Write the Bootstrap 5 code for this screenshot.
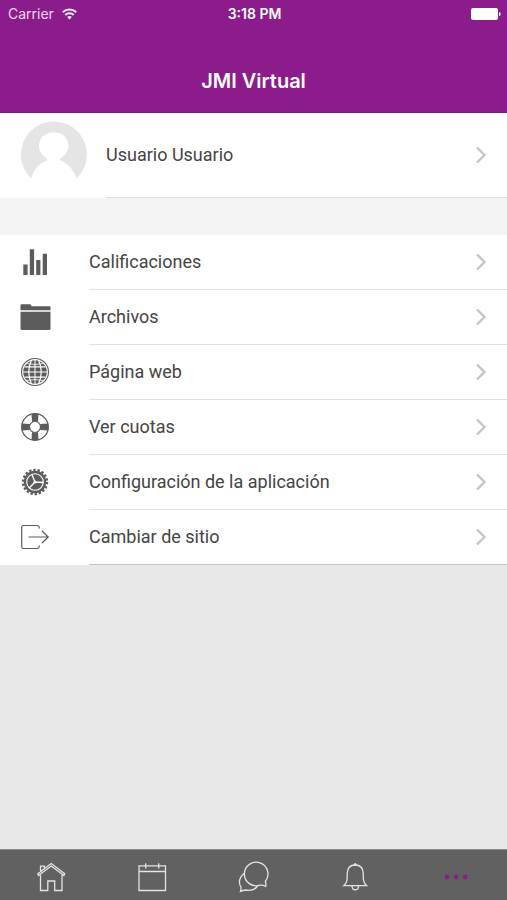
<!DOCTYPE html>
<html lang="es">
<head>
<meta charset="utf-8">
<meta name="viewport" content="width=device-width, initial-scale=1">
<title>JMI Virtual</title>
<link href="https://cdn.jsdelivr.net/npm/bootstrap@5.3.0/dist/css/bootstrap.min.css" rel="stylesheet">
<style>
  body { font-family: Inter, "Liberation Sans", sans-serif; background: #e8e8e8; color: #444; }
  .app-header { background: #8c1c8c; border-bottom: 1px solid #7b177b; }
  .status-bar { height: 27px; font-size: 14px; padding: 0 6px 0 8px; }
  .status-bar .carrier { color: #f0d8f0; }
  .app-title { font-size: 20px; line-height: 24px; font-weight: 600; padding: 42px 0 19px; }
  .menu-row { font-family: Roboto, Inter, sans-serif; font-size: 18px; line-height: 24px; color: #444; padding-left: 19px; }
  .menu-label { border-bottom: 1px solid #e2e2e2; padding-right: 20px; }
  .menu-icon { width: 70px; color: #5c5c5c; padding-bottom: 2px; }
  .menu-list .menu-label { height: 55px; }
  .menu-list .menu-row:last-child .menu-label { border-color: #c4c4c4; }
  .profile .menu-label { height: 85px; border-color: #dedede; }
  .profile .menu-icon { width: 87px; color: #e5e5e5; }
  .section-gap { height: 37px; background: #f4f4f4; }
  .tab-bar { background: #616161; border-top: 1px solid #8a8a8a; height: 51px; }
  .tab-bar a { color: #e4e4e4; padding-top: 4px; }
  .tab-bar a.active { color: #8c1c8c; }
  svg { display: block; flex: none; }
</style>
<script src="https://cdn.jsdelivr.net/npm/bootstrap@5.3.0/dist/js/bootstrap.bundle.min.js"></script>
</head>
<body>
<div class="d-flex flex-column min-vh-100">
  <header class="app-header text-white">
    <div class="status-bar row g-0 align-items-center">
      <div class="col d-flex align-items-center gap-2">
        <span class="carrier">Carrier</span>
        <svg width="15" height="12" viewBox="0 0 15 12" fill="none" stroke="#fbeefb" stroke-width="2" aria-label="Wi-Fi"><path d="M.8 4.200a9.600 9.600 0 0 1 13.400 0M3.300 7a6 6 0 0 1 8.400 0"/><path d="M7.500 11.500 5.200 9.100a3.200 3.200 0 0 1 4.600 0z" fill="#fff" stroke="none"/></svg>
      </div>
      <div class="col-auto fw-semibold">3:18 PM</div>
      <div class="col d-flex justify-content-end">
        <svg width="30" height="12" viewBox="0 0 30 12" fill="#fff" aria-label="Batería"><rect width="27" height="12" rx="2"/><path d="M28 4c2.200 .6 2.200 3.400 0 4z"/></svg>
      </div>
    </div>
    <h1 class="app-title text-center m-0">JMI Virtual</h1>
  </header>

  <main class="flex-grow-1">
    <div class="profile bg-white">
      <a href="#perfil" class="menu-row d-flex align-items-center text-decoration-none">
        <span class="menu-icon"><svg width="70" height="68" viewBox="0 2 70 68" fill="currentColor"><path fill-rule="evenodd" d="M12.300 59.500A33 33 0 1 1 57.500 59.500C55 52 50 45 42.500 42L41 41.300V39.500C46 37 49.500 32 49.500 27C49.500 18 42.500 13.300 34.700 13.300S20 18 20 27C20 32 23.500 37 28 39.500V41.300L26.500 42C19 45 14.500 52 12.300 59.500z"/></svg></span>
        <span class="menu-label flex-grow-1 d-flex align-items-center justify-content-between">Usuario Usuario
          <svg width="12" height="18" viewBox="0 0 12 18" fill="none" stroke="#c5c5c5" stroke-width="2.400"><path d="m2 1.500 7.500 7.500L2 16.500"/></svg></span>
      </a>
    </div>
    <div class="section-gap"></div>
    <nav class="menu-list bg-white" aria-label="Opciones">
      <a href="#calificaciones" class="menu-row d-flex align-items-center text-decoration-none">
        <span class="menu-icon"><svg width="32" height="32" viewBox="0 0 32 32" fill="currentColor"><path d="M4.300 18.500h4.300V29H4.300zM10.800 3.300h4.300V29h-4.300zM17.200 14h4.200v15h-4.200zM23.700 7.700H28V29h-4.300z"/></svg></span>
        <span class="menu-label flex-grow-1 d-flex align-items-center justify-content-between">Calificaciones
          <svg width="12" height="18" viewBox="0 0 12 18" fill="none" stroke="#c5c5c5" stroke-width="2.400"><path d="m2 1.500 7.500 7.500L2 16.500"/></svg></span>
      </a>
      <a href="#archivos" class="menu-row d-flex align-items-center text-decoration-none">
        <span class="menu-icon"><svg width="32" height="32" viewBox="0 0 32 32" fill="currentColor"><path d="M1.500 9.300V4.500q0-1.200 1.200-1.200h8q1 0 1.300.8l.5 1.200H30.500q1 0 1 1v3zM1.500 10.700h30V27.500q0 1.500-1.500 1.500H3q-1.500 0-1.500-1.500z"/></svg></span>
        <span class="menu-label flex-grow-1 d-flex align-items-center justify-content-between">Archivos
          <svg width="12" height="18" viewBox="0 0 12 18" fill="none" stroke="#c5c5c5" stroke-width="2.400"><path d="m2 1.500 7.500 7.500L2 16.500"/></svg></span>
      </a>
      <a href="#web" class="menu-row d-flex align-items-center text-decoration-none">
        <span class="menu-icon"><svg width="32" height="32" viewBox="0 0 32 32" fill="none"><circle cx="16" cy="16" r="13.500" stroke="currentColor" stroke-width="1.100"/><circle cx="16" cy="16" r="11.800" fill="currentColor"/><g stroke="#fff" stroke-width="1.200"><path d="M16 4v24M4 16h24" stroke-width="1"/><path d="M5.500 10.800h21M5.500 21.200h21M12.500 4q-5.500 12 0 24M19.500 4q5.500 12 0 24"/><path d="M7.500 7.500q8.500 2 17 0M7.500 24.500q8.500-2 17 0" stroke-width=".8"/></g></svg></span>
        <span class="menu-label flex-grow-1 d-flex align-items-center justify-content-between">Página web
          <svg width="12" height="18" viewBox="0 0 12 18" fill="none" stroke="#c5c5c5" stroke-width="2.400"><path d="m2 1.500 7.500 7.500L2 16.500"/></svg></span>
      </a>
      <a href="#cuotas" class="menu-row d-flex align-items-center text-decoration-none">
        <span class="menu-icon"><svg width="32" height="32" viewBox="0 0 32 32" fill="none" stroke="currentColor"><circle cx="16" cy="16" r="13.300" stroke-width="1.300"/><circle cx="16" cy="16" r="5.500" stroke-width="1.200"/><path d="M12.500 2.700h7l-.5 8.300q-3-1.200-6 0zM12.500 29.300h7l-.5-8.300q-3 1.200-6 0zM2.700 12.500v7l8.300-.5q-1.200-3 0-6zM29.300 12.500v7l-8.300-.5q1.200-3 0-6z" fill="currentColor" stroke="none"/></svg></span>
        <span class="menu-label flex-grow-1 d-flex align-items-center justify-content-between">Ver cuotas
          <svg width="12" height="18" viewBox="0 0 12 18" fill="none" stroke="#c5c5c5" stroke-width="2.400"><path d="m2 1.500 7.500 7.500L2 16.500"/></svg></span>
      </a>
      <a href="#configuracion" class="menu-row d-flex align-items-center text-decoration-none">
        <span class="menu-icon"><svg width="32" height="32" viewBox="0 0 32 32" fill="none"><circle cx="16" cy="16" r="12.100" stroke="currentColor" stroke-width="2.200" stroke-dasharray="2.400 1.824"/><circle cx="16" cy="16" r="11.200" fill="currentColor"/><circle cx="16" cy="16" r="8.300" stroke="#fff" stroke-width="1.100"/><path d="m16 16-3.200-7.800M16 16l8.300.5M16 16l-5.800 6" stroke="#fff" stroke-width="1.300"/><circle cx="16" cy="16" r="1.500" fill="#fff"/></svg></span>
        <span class="menu-label flex-grow-1 d-flex align-items-center justify-content-between">Configuración de la aplicación
          <svg width="12" height="18" viewBox="0 0 12 18" fill="none" stroke="#c5c5c5" stroke-width="2.400"><path d="m2 1.500 7.500 7.500L2 16.500"/></svg></span>
      </a>
      <a href="#sitio" class="menu-row d-flex align-items-center text-decoration-none">
        <span class="menu-icon"><svg width="32" height="32" viewBox="0 0 32 32" fill="none" stroke="currentColor" stroke-width="1.200"><path d="M20.300 7.500v-.8q0-2-2-2.200H4.500Q2.700 4.500 2.700 6.300v19.400q0 1.800 1.800 1.800h13.800q2-.2 2-2.200v-.8M9.500 16h19.700M22.800 9.800 29.200 16l-6.400 6.200"/></svg></span>
        <span class="menu-label flex-grow-1 d-flex align-items-center justify-content-between">Cambiar de sitio
          <svg width="12" height="18" viewBox="0 0 12 18" fill="none" stroke="#c5c5c5" stroke-width="2.400"><path d="m2 1.500 7.500 7.500L2 16.500"/></svg></span>
      </a>
    </nav>
  </main>

  <nav class="tab-bar d-flex sticky-bottom" aria-label="Principal">
    <a href="#inicio" class="col d-flex align-items-center justify-content-center" aria-label="Inicio"><svg width="32" height="32" viewBox="0 0 32 32" fill="none" stroke="currentColor" stroke-width="1.300"><path d="M5.500 14v15.500h7.300V20h6.900v9.500h7.300V14M5.500 11.300V5.200h3.800V8M3.500 14.500 2.800 12.800 16.200 2.600l13.500 10.200-.8 1.700L16.200 5z"/></svg></a>
    <a href="#calendario" class="col d-flex align-items-center justify-content-center" aria-label="Calendario"><svg width="32" height="32" viewBox="0 0 32 32" fill="none" stroke="currentColor" stroke-width="1.300"><path d="M3 4.800h26.500v24.700H3zM3 10.500h26.500M9.700 2.200v5.300M22.700 2.200v5.300"/></svg></a>
    <a href="#mensajes" class="col d-flex align-items-center justify-content-center" aria-label="Mensajes"><svg width="32" height="32" viewBox="0 0 32 32" fill="none" stroke="currentColor" stroke-width="1.300"><path d="M27.300 20.500A11.800 11.800 0 1 0 22 24.200Q25 24 27.700 25.300Q28.300 23 27.300 20.500zM6.500 12Q1 16.500 1.500 22Q1.700 24.500 2.900 25.800Q3.200 28 2.500 30.300Q5.200 29.200 7.700 29Q15.500 30.500 19.700 25"/></svg></a>
    <a href="#avisos" class="col d-flex align-items-center justify-content-center" aria-label="Avisos"><svg width="32" height="32" viewBox="0 0 32 32" fill="none" stroke="currentColor" stroke-width="1.300"><path d="M4.700 24.700h23Q24.500 22 24.300 17V12.500Q24 4 16.200 4T8.200 12.500V17Q8 22 4.700 24.700zM13 25.300c.3 4.800 6.200 4.800 6.500 0"/><circle cx="16.200" cy="3.400" r="1.500" fill="currentColor" stroke="none"/></svg></a>
    <a href="#mas" class="active col d-flex align-items-center justify-content-center" aria-label="Más" aria-current="page"><svg width="32" height="32" viewBox="0 0 32 32" fill="currentColor"><circle cx="7" cy="16" r="2.400"/><circle cx="16.100" cy="16" r="2.400"/><circle cx="25.200" cy="16" r="2.400"/></svg></a>
  </nav>
</div>
</body>
</html>
